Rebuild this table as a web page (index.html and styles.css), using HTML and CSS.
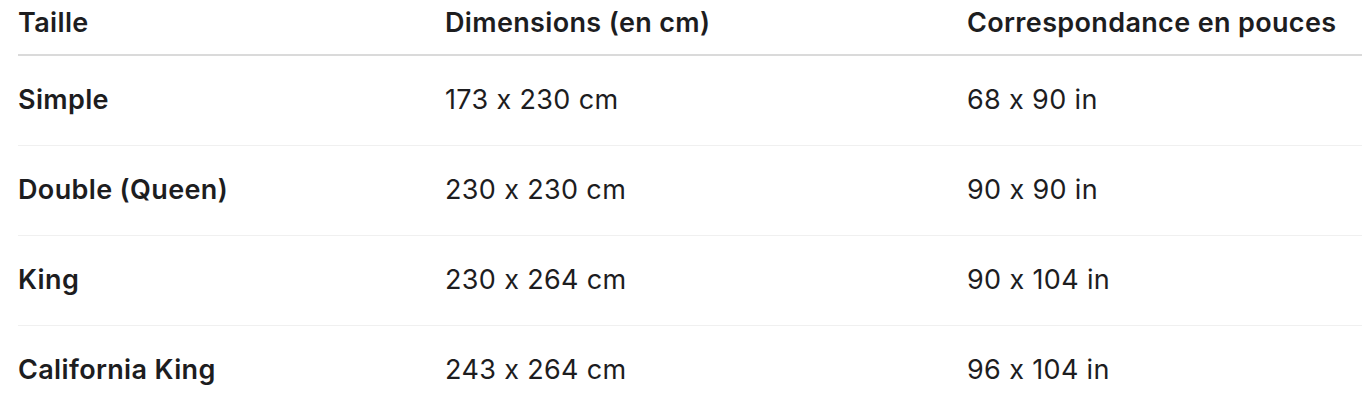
FILE: index.html
```html
<!DOCTYPE html>
<html lang="fr">
<head>
<meta charset="utf-8">
<link rel="stylesheet" href="styles.css">
</head>
<body>
<table class="sizes">
  <colgroup>
    <col class="c1"><col class="c2"><col class="c3">
  </colgroup>
  <thead>
    <tr><th>Taille</th><th>Dimensions (en cm)</th><th>Correspondance en pouces</th></tr>
  </thead>
  <tbody>
    <tr><td class="name">Simple</td><td>173 x 230 cm</td><td>68 x 90 in</td></tr>
    <tr><td class="name">Double (Queen)</td><td>230 x 230 cm</td><td>90 x 90 in</td></tr>
    <tr><td class="name">King</td><td>230 x 264 cm</td><td>90 x 104 in</td></tr>
    <tr><td class="name">California King</td><td>243 x 264 cm</td><td>96 x 104 in</td></tr>
  </tbody>
</table>
</body>
</html>
```
FILE: styles.css
```css
html, body {
  margin: 0;
  padding: 0;
  background: #ffffff;
}
body {
  padding-left: 18px;
  font-family: Inter, "Noto Sans", sans-serif;
  font-feature-settings: "calt" 0;
  color: #1d1d1f;
  overflow: hidden;
}
.sizes {
  border-collapse: collapse;
  width: 1344px;
  table-layout: fixed;
}
.c1 { width: 427px; }
.c2 { width: 522px; }
.c3 { width: 395px; }
.sizes th,
.sizes td {
  text-align: left;
  font-size: 27px;
  line-height: 36px;
  letter-spacing: 0.35px;
}
.sizes th {
  font-weight: 600;
  padding: 5px 0 13px 0;
  border-bottom: 2px solid #dadada;
}
.sizes td {
  font-weight: 400;
  padding: 26px 0 27px 0;
  border-bottom: 1px solid #f0f0f0;
}
.sizes td.name {
  font-weight: 600;
}
```
